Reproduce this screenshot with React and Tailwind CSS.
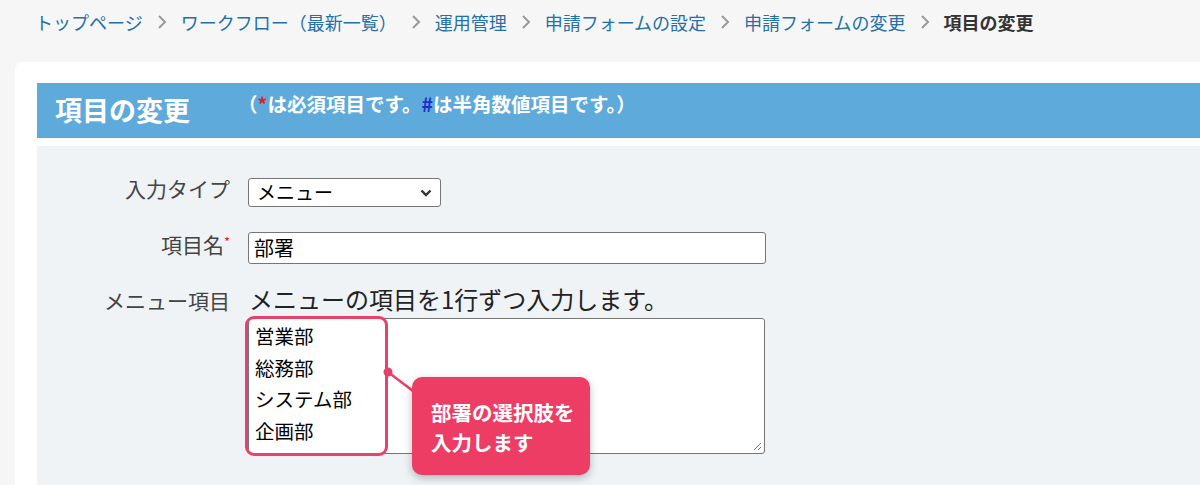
import React from "react";

const crumbs = ["トップページ", "ワークフロー（最新一覧）", "運用管理", "申請フォームの設定", "申請フォームの変更"];

const Chevron = () => (
    <svg width="10" height="16" viewBox="0 0 10 16" className="mx-[14px]">
        <path d="M2 2 L8 8 L2 14" fill="none" stroke="#9a9a9a" strokeWidth="2" />
    </svg>
);

const App = () => {
    return (
        <div className="w-[1200px] h-[485px] overflow-hidden bg-[#f6f6f7] text-[#333] [font-family:'Noto_Sans_CJK_JP','Noto_Sans',sans-serif]">
            <nav className="flex items-center h-[44px] pl-[35px] text-[18px]">
                {crumbs.map((c) => (
                    <React.Fragment key={c}>
                        <span className="text-[#2470a8]">{c}</span>
                        <Chevron />
                    </React.Fragment>
                ))}
                <span className="font-bold text-[#333]">項目の変更</span>
            </nav>
            <div className="ml-[15px] mt-[18px] w-[1220px] bg-white rounded-[8px] pt-[21px] pl-[22px]">
                <div className="flex items-center h-[55px] bg-[#5eaadb] border-b border-[#6f9fc4] pl-[18px]">
                    <h1 className="text-[27px] font-bold text-white">項目の変更</h1>
                    <p className="ml-[48px] -mt-[12px] text-[19.5px] font-bold text-white">
                        （<span className="text-[#e0202a]">*</span>は必須項目です。<span className="text-[#1d2fd0]">#</span>は半角数値項目です。）
                    </p>
                </div>
                <div className="h-[8px] bg-white" />
                <div className="bg-[#eff3f6] pt-[32px] h-[400px]">
                    <div className="flex items-center">
                        <label className="w-[193px] text-right text-[21px] text-[#444] -mt-[8px]">入力タイプ</label>
                        <div className="ml-[18px] w-[193px] h-[29px] bg-white border border-[#767676] rounded-[3px] flex items-center justify-between px-[8px]">
                            <span className="text-[19px] text-black">メニュー</span>
                            <svg width="12" height="8" viewBox="0 0 12 8"><path d="M1.5 1.5 L6 6 L10.5 1.5" fill="none" stroke="#333" strokeWidth="2.4" /></svg>
                        </div>
                    </div>
                    <div className="flex items-center mt-[25px]">
                        <label className="w-[193px] text-right text-[21px] text-[#444] -mt-[6px]">項目名<sup className="text-[#e0202a] text-[13px]">*</sup></label>
                        <div className="ml-[18px] w-[518px] h-[32px] bg-white border border-[#767676] rounded-[3px] flex items-center px-[5px]">
                            <span className="text-[20px] text-black">部署</span>
                        </div>
                    </div>
                    <div className="flex mt-[20px]">
                        <label className="w-[193px] text-right text-[21px] text-[#444] pt-[1px]">メニュー項目</label>
                        <div className="ml-[18px]">
                            <p className="text-[24px] text-[#222] leading-[30px] pl-[1px]">メニューの項目を1行ずつ入力します。</p>
                            <div className="relative mt-[4px] w-[517px] h-[136px] bg-white border border-[#767676] rounded-[3px]">
                                <div className="pl-[6px] pt-[1px] text-[19.5px] leading-[31.5px] text-black">
                                    <div>営業部</div>
                                    <div>総務部</div>
                                    <div>システム部</div>
                                    <div>企画部</div>
                                </div>
                                <svg width="10" height="10" viewBox="0 0 10 10" className="absolute right-[2px] bottom-[2px]">
                                    <path d="M9 2 L2 9 M9 6 L6 9" stroke="#777" strokeWidth="1" />
                                </svg>
                                <div className="absolute -left-[4px] -top-[3px] w-[143px] h-[140px] border-[3px] border-[#e8426a] rounded-[9px]" />
                                <svg width="40" height="30" viewBox="0 0 40 30" className="absolute left-[134px] top-[48px] overflow-visible">
                                    <circle cx="5" cy="5" r="4.5" fill="#e8426a" />
                                    <path d="M5 5 L30 24" stroke="#e8426a" strokeWidth="2.5" />
                                </svg>
                                <div className="absolute left-[163px] top-[58px] w-[178px] h-[98px] bg-[#ee3d64] rounded-[10px] shadow-[0_3px_8px_rgba(0,0,0,0.25)] pl-[19px] pt-[20px] text-[20.5px] font-bold leading-[30px] text-white">
                                    <div>部署の選択肢を</div>
                                    <div>入力します</div>
                                </div>
                            </div>
                        </div>
                    </div>
                </div>
            </div>
        </div>
    );
};

export default App;
